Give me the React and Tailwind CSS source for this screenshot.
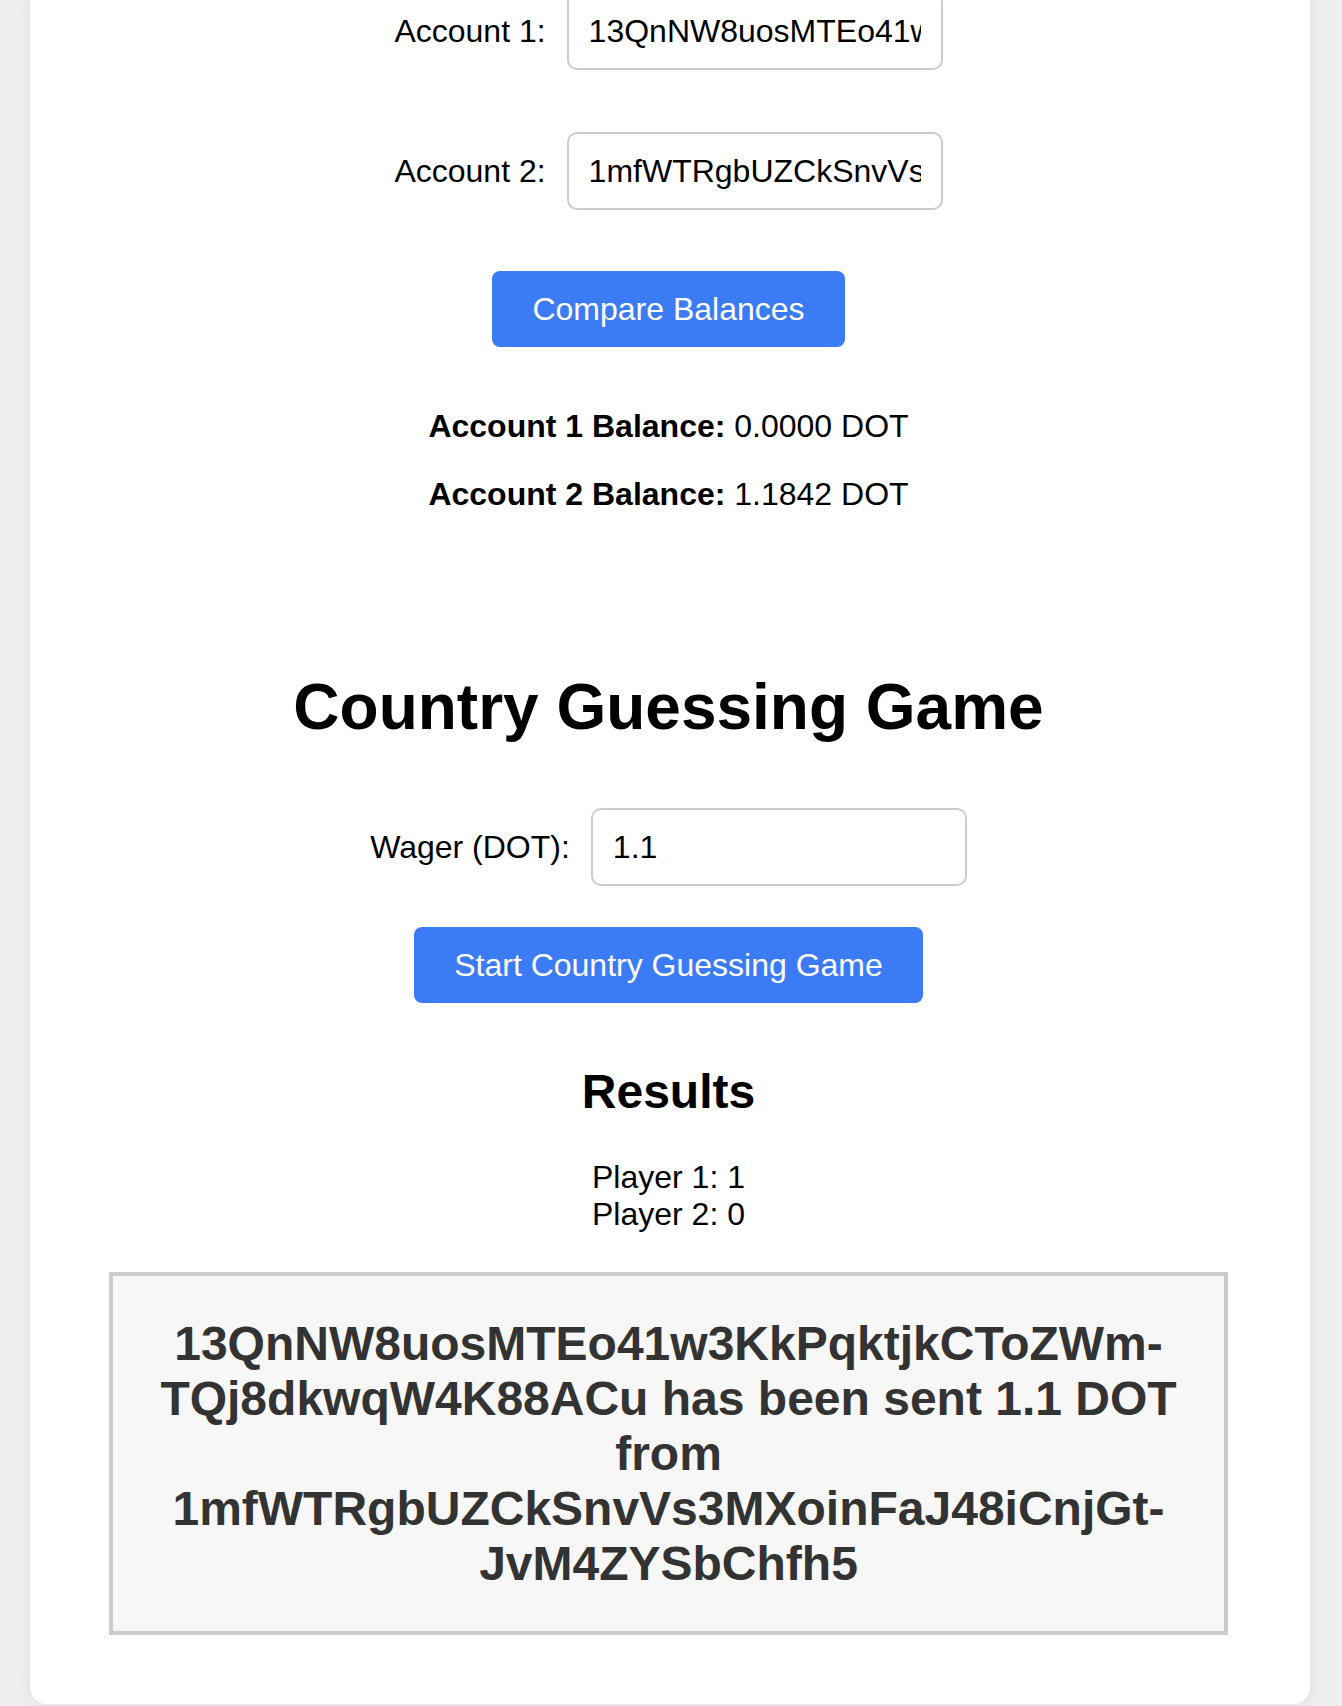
import { useState } from "react";

const ACCOUNT_1 = "13QnNW8uosMTEo41w3KkPqktjkCToZWmTQj8dkwqW4K88ACu";
const ACCOUNT_2 = "1mfWTRgbUZCkSnvVs3MXoinFaJ48iCnjGtJvM4ZYSbChfh5";

function Field({ label, value, onChange, className = "" }) {
  return (
    <div className={`flex items-center gap-[21px] ${className}`}>
      <label className="text-[32px] text-black">{label}</label>
      <input
        type="text"
        value={value}
        onChange={(e) => onChange(e.target.value)}
        className="h-[78px] w-[376px] rounded-[10px] border-2 border-[#cccccc] bg-white px-[20px] text-[32px] text-black outline-none"
      />
    </div>
  );
}

export default function App() {
  const [account1, setAccount1] = useState(ACCOUNT_1);
  const [account2, setAccount2] = useState(ACCOUNT_2);
  const [wager, setWager] = useState("1.1");

  return (
    <div
      className="min-h-screen overflow-hidden bg-[#efefef]"
      style={{ fontFamily: '"Liberation Sans", Arial, sans-serif' }}
    >
      <div className="ml-[30px] flex w-[1280px] flex-col items-center rounded-b-[16px] bg-white pb-[69px] pr-[3px] shadow-[0_0_16px_rgba(0,0,0,0.08)]">
        <Field
          label="Account 1:"
          value={account1}
          onChange={setAccount1}
          className="-mt-[8px]"
        />
        <Field
          label="Account 2:"
          value={account2}
          onChange={setAccount2}
          className="mt-[62px]"
        />

        <button className="mt-[61px] h-[76px] rounded-[8px] bg-[#3b7cf6] px-[40px] text-[32px] text-white">
          Compare Balances
        </button>

        <div className="mt-[61px] flex flex-col items-center gap-[31px] text-[32px] leading-[37px] text-black">
          <p>
            <strong className="font-bold">Account 1 Balance:</strong> 0.0000 DOT
          </p>
          <p>
            <strong className="font-bold">Account 2 Balance:</strong> 1.1842 DOT
          </p>
        </div>

        <h1 className="mt-[157px] text-[64px] font-bold leading-[74px] text-black">
          Country Guessing Game
        </h1>

        <Field
          label="Wager (DOT):"
          value={wager}
          onChange={setWager}
          className="mt-[64px]"
        />

        <button className="mt-[41px] h-[76px] rounded-[8px] bg-[#3b7cf6] px-[40px] text-[32px] text-white">
          Start Country Guessing Game
        </button>

        <h2 className="mt-[61px] text-[48px] font-bold leading-[55px] text-black">
          Results
        </h2>

        <div className="mt-[40px] text-center text-[32px] leading-[37px] text-black">
          <div>Player 1: 1</div>
          <div>Player 2: 0</div>
        </div>

        <div className="mt-[39px] w-[1119px] border-4 border-[#cccccc] bg-[#f7f7f7] px-[20px] py-[40px]">
          <h2 className="text-center text-[48px] font-bold leading-[55px] text-[#333333]">
            13QnNW8uosMTEo41w3KkPqktjkCToZWm-
            <br />
            TQj8dkwqW4K88ACu has been sent 1.1 DOT
            <br />
            from
            <br />
            1mfWTRgbUZCkSnvVs3MXoinFaJ48iCnjGt-
            <br />
            JvM4ZYSbChfh5
          </h2>
        </div>
      </div>
    </div>
  );
}
